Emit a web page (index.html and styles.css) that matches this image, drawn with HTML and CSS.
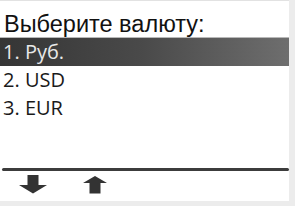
FILE: index.html
```html
<!DOCTYPE html>
<html>
<head>
<meta charset="utf-8">
<link rel="stylesheet" href="styles.css">
</head>
<body>
<div class="frame">
  <div class="screen">
    <div class="title">Выберите валюту:</div>
    <div class="menu">
      <div class="item selected">1. Руб.</div>
      <div class="item">2. USD</div>
      <div class="item">3. EUR</div>
    </div>
    <div class="spacer"></div>
    <div class="divider"></div>
    <div class="softkeys">
      <svg class="arrow down" width="30" height="19" viewBox="0 0 30 19"><path d="M9.5 0 H20.5 V10 H29 L15 18.5 L1 10 H9.5 Z" fill="#333"/></svg>
      <svg class="arrow up" width="26" height="18" viewBox="0 0 26 18"><path d="M13 0 L25 7 H18.5 V17.5 H7.5 V7 H1 Z" fill="#333"/></svg>
    </div>
  </div>
</div>
</body>
</html>
```
FILE: styles.css
```css
html, body {
  margin: 0;
  padding: 0;
  background: #ececec;
}
.frame {
  width: 295px;
  height: 206px;
  background: #ececec;
}
.screen {
  width: 289px;
  height: 201px;
  background: #fff;
  display: flex;
  flex-direction: column;
  box-sizing: border-box;
  border-top: 1px solid #e2e2e2;
}
.title {
  font-family: "Liberation Sans", Arial, sans-serif;
  font-size: 23.5px;
  color: #111;
  padding: 10px 0 0 4px;
  height: 26px;
  line-height: 26px;
}
.menu {
  display: flex;
  flex-direction: column;
}
.item {
  font-family: "Open Sans", sans-serif;
  font-size: 20px;
  color: #1a1a1a;
  height: 28px;
  line-height: 28px;
  padding-left: 3px;
}
.item.selected {
  color: #e8e8e8;
  background: linear-gradient(to right, #353535 0%, #4a4a4a 50%, #6e6e6e 100%);
  border-top: 1px solid #b8b8b8;
  height: 28px;
}
.spacer {
  flex: 1;
}
.divider {
  height: 3px;
  background: #3c3c3c;
  border-radius: 2px;
  margin: 0 0 0 2px;
}
.softkeys {
  height: 30px;
  display: flex;
  align-items: flex-start;
  padding-top: 4px;
  box-sizing: border-box;
}
.arrow.down {
  margin-left: 18px;
  margin-top: 0;
}
.arrow.up {
  margin-left: 34px;
  margin-top: 1px;
}
```
